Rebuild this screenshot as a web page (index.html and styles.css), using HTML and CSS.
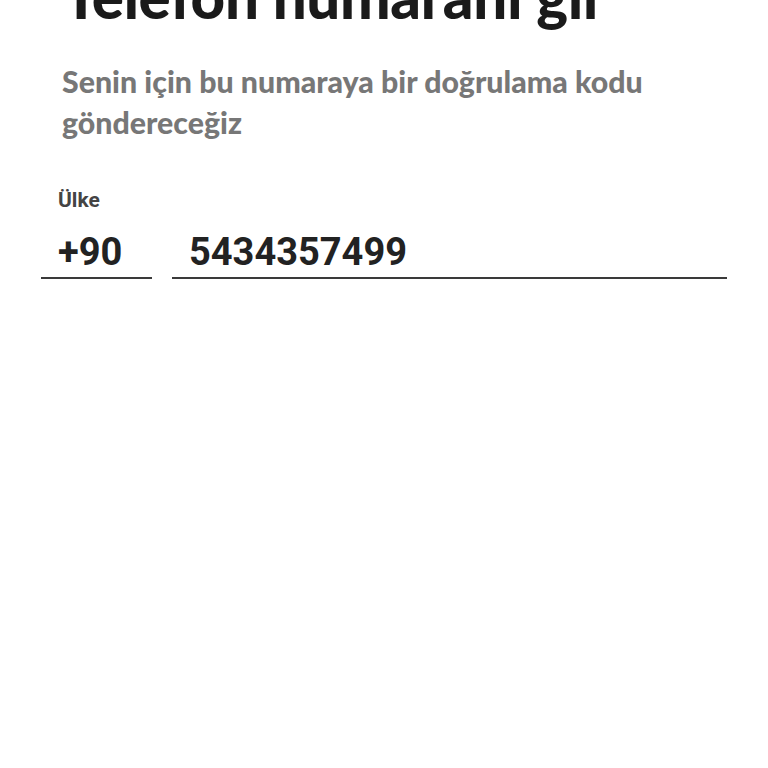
FILE: index.html
```html
<!DOCTYPE html>
<html lang="tr">
<head>
<meta charset="utf-8">
<link rel="stylesheet" href="styles.css">
</head>
<body>
<main class="screen">
  <h1 class="title">Telefon numaranı gir</h1>
  <p class="subtitle">Senin için bu numaraya bir doğrulama kodu göndereceğiz</p>
  <div class="label">Ülke</div>
  <div class="phone-row">
    <div class="field code">+90</div>
    <div class="field number">5434357499</div>
  </div>
</main>
</body>
</html>
```
FILE: styles.css
```css
html, body {
  margin: 0;
  padding: 0;
  background: #ffffff;
  overflow: hidden;
}
.screen {
  width: 768px;
  height: 768px;
  box-sizing: border-box;
  padding: 0 41px 0 41px;
}
.title {
  margin: -39px 0 0 22px;
  font-family: Lato, "Noto Sans", sans-serif;
  font-weight: 900;
  font-size: 60px;
  line-height: 70px;
  color: #1a1a1a;
  letter-spacing: -0.3px;
}
.subtitle {
  margin: 30px 0 0 21px;
  width: 650px;
  font-family: Lato, "Noto Sans", sans-serif;
  font-weight: 900;
  font-size: 30.3px;
  line-height: 41px;
  color: #777777;
}
.label {
  margin: 45px 0 0 17px;
  font-family: Roboto, sans-serif;
  font-weight: 700;
  font-size: 21px;
  line-height: 25px;
  color: #444444;
}
.phone-row {
  display: flex;
  gap: 20px;
  margin-top: 16px;
}
.field {
  font-family: Roboto, sans-serif;
  font-weight: 700;
  font-size: 38px;
  line-height: 46px;
  color: #222222;
  border-bottom: 2px solid #3a3a3a;
  padding: 0 0 2px 17px;
}
.code {
  width: 111px;
  box-sizing: border-box;
}
.number {
  flex: 1;
}
```
